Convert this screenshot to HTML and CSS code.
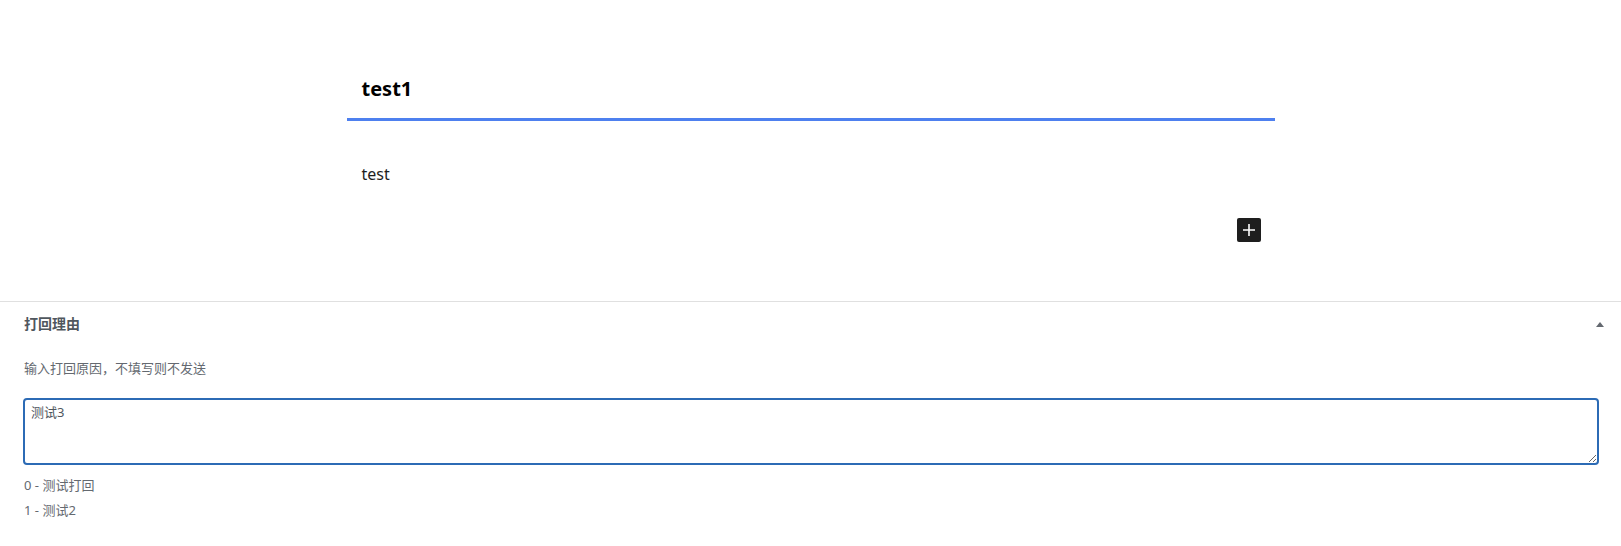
FILE: index.html
```html
<!DOCTYPE html>
<html lang="zh-CN">
<head>
  <meta charset="UTF-8" />
  <meta name="viewport" content="width=device-width, initial-scale=1.0" />
  <title>编辑文章</title>
  <link rel="stylesheet" href="styles.css">
</head>
<body>

  <div class="editor">
    <div class="editor-column">
      <h1 class="post-title">test1</h1>
      <p class="post-text">test</p>
      <div class="inserter-row">
        <button class="inserter" aria-label="添加区块">
          <svg width="24" height="24" viewBox="0 0 24 24">
            <path d="M12 6v12M6 12h12" stroke="#fff" stroke-width="1.6" fill="none"/>
          </svg>
        </button>
      </div>
    </div>
  </div>

  <div class="metabox">
    <div class="metabox-header">
      <h2>打回理由</h2>
      <span class="toggle-arrow"></span>
    </div>
    <div class="inside">
      <p class="hint">输入打回原因，不填写则不发送</p>
      <textarea class="reason" autofocus>测试3</textarea>
      <ul class="history">
        <li>0 - 测试打回</li>
        <li>1 - 测试2</li>
      </ul>
    </div>
  </div>

</body>
</html>
```

FILE: styles.css
```css
body {
  margin: 0;
  font-family: "Noto Sans", "Noto Sans CJK SC", sans-serif;
  background: #fff;
  color: #1e1e1e;
}
.editor {
  height: 301px;
  box-sizing: border-box;
  padding-top: 75px;
}
.editor-column {
  width: 928px;
  margin: 0 auto;
}
.post-title {
  margin: 0;
  padding: 0 15px 15px;
  font-size: 20px;
  line-height: 28px;
  font-weight: bold;
  color: #000;
  border-bottom: 3px solid #4e80ef;
}
.post-text {
  margin: 41px 0 0;
  padding: 0 15px;
  font-size: 16px;
  line-height: 24px;
}
.inserter-row {
  display: flex;
  justify-content: flex-end;
  padding-right: 14px;
  margin-top: 32px;
}
.inserter {
  width: 24px;
  height: 24px;
  padding: 0;
  border: none;
  border-radius: 2px;
  background: #1e1e1e;
  display: flex;
}
.metabox {
  border-top: 1px solid #e0e0e0;
}
.metabox-header {
  height: 42px;
  display: flex;
  align-items: center;
  justify-content: space-between;
  padding: 0 17px 0 24px;
}
.metabox-header h2 {
  margin: 0;
  font-size: 14px;
  font-weight: bold;
  color: #50575e;
}
.toggle-arrow {
  width: 0;
  height: 0;
  margin-top: 3px;
  border-left: 4px solid transparent;
  border-right: 4px solid transparent;
  border-bottom: 5px solid #646970;
}
.inside {
  padding: 0 22px 20px 23px;
}
.hint {
  margin: 15px 0 0 1px;
  font-size: 13px;
  line-height: 19.5px;
  color: #646970;
}
.reason {
  display: block;
  width: 100%;
  height: 67px;
  box-sizing: border-box;
  margin-top: 19px;
  padding: 3px 6px;
  border: 2px solid #2c6bb5;
  border-radius: 4px;
  font-family: "Noto Sans", "Noto Sans CJK SC", sans-serif;
  font-size: 13px;
  line-height: 18px;
  color: #50575e;
  outline: none;
}
.history {
  list-style: none;
  margin: 8px 0 0 1px;
  padding: 0;
  font-size: 13px;
  line-height: 25px;
  color: #646970;
}
```
